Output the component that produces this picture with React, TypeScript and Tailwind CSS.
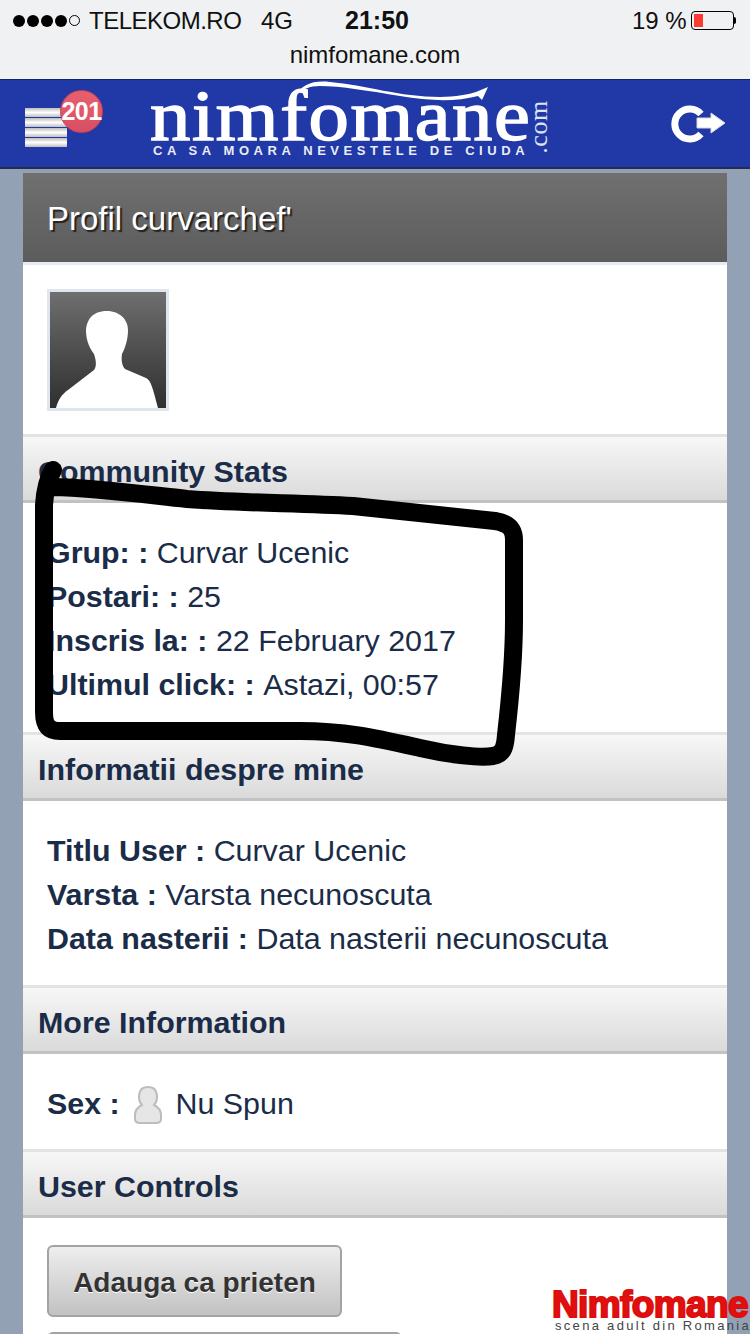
import React from 'react';

const SectionHead = ({ title }: { title: string }) => (
  <div className="h-[69px] border-t-[3px] border-b-[3px] border-t-[#e3e3e3] border-b-[#c2c2c2] bg-gradient-to-b from-[#f7f7f7] to-[#dadada] pl-[15px] pt-[5px] flex items-center">
    <h2 className="text-[30.4px] font-bold text-[#1a2c47] leading-none">{title}</h2>
  </div>
);

const Row = ({ label, value }: { label: string; value: string }) => (
  <div className="h-[44px] flex items-center text-[30.4px] text-[#1a2c47] whitespace-pre">
    <b>{label} </b>
    <span>{value}</span>
  </div>
);

const MenuIcon = () => (
  <div className="flex flex-col w-[42px] gap-[1px]">
    <div className="h-[9px] bg-gradient-to-b from-[#bdbdbd] via-white to-[#bdbdbd]" />
    <div className="h-[9px] bg-gradient-to-b from-[#bdbdbd] via-white to-[#bdbdbd]" />
    <div className="h-[9px] bg-gradient-to-b from-[#bdbdbd] via-white to-[#bdbdbd]" />
    <div className="h-[9px] bg-gradient-to-b from-[#bdbdbd] via-white to-[#bdbdbd]" />
  </div>
);

export default function App() {
  return (
    <div className="relative w-[750px] h-[1334px] overflow-hidden bg-[#92a1b4] font-['Liberation_Sans',Arial,sans-serif]">
      {/* browser chrome */}
      <div className="h-[79px] bg-[#f0f1f3] text-[#111]">
        <div className="h-[41px] flex items-center relative">
          <div className="ml-[13px] flex items-center gap-[2px] w-[68px]">
            <span className="w-[12px] h-[12px] rounded-full bg-black" />
            <span className="w-[12px] h-[12px] rounded-full bg-black" />
            <span className="w-[12px] h-[12px] rounded-full bg-black" />
            <span className="w-[12px] h-[12px] rounded-full bg-black" />
            <span className="w-[11px] h-[11px] rounded-full border border-black" />
          </div>
          <span className="ml-[8px] text-[24px] tracking-[-0.5px] w-[172px]">TELEKOM.RO</span>
          <span className="text-[24px] w-[84px]">4G</span>
          <span className="text-[25px] font-bold w-[287px]">21:50</span>
          <span className="text-[24px] w-[59px]">19 %</span>
          <div className="w-[43px] h-[19px] border border-black rounded-[4px] p-[2px] flex">
            <div className="w-[9px] bg-[#fb3b30]" />
          </div>
          <div className="w-[2px] h-[7px] bg-black rounded-r-sm" />
        </div>
        <div className="text-center text-[24px] leading-[28px]">nimfomane.com</div>
      </div>

      {/* site header */}
      <div className="relative h-[90px] bg-[#2139a6] border-t border-[#13235f] border-b-[2px] border-b-[#232c52]">
        <div className="absolute left-[25px] top-[28px]"><MenuIcon /></div>
        <div className="absolute left-[60px] top-[10px] w-[43px] h-[43px] rounded-full bg-gradient-to-b from-[#e8606f] to-[#d94f62] border border-[#c93f52] flex items-center justify-center text-white font-bold text-[25px] tracking-[-0.5px]">201</div>
        <div className="absolute left-[150px] top-[1px] origin-left scale-x-[1.12] font-['Liberation_Serif',serif] text-white text-[72px] leading-[70px] tracking-[1.4px] [-webkit-text-stroke:1.5px_white]">nimfomane</div>
        <svg className="absolute left-[290px] top-[0px]" width="200" height="24" viewBox="0 0 200 24">
          <path d="M5 16C12 4 24 0 40 2C75 5 110 17 150 17C165 17 180 14 186 12L198 7L192 20L188 16C165 22 140 21 110 16C80 11 50 6 30 6C20 6 12 9 5 16Z" fill="#fff" />
        </svg>
        <div className="absolute left-[153px] top-[63px] text-white font-bold text-[13px] leading-[16px] tracking-[4.57px] whitespace-nowrap opacity-90">CA SA MOARA NEVESTELE DE CIUDA</div>
        <div className="absolute left-[511px] top-[37px] w-[56px] text-center -rotate-90 font-['Liberation_Serif',serif] text-[#dfe3f3] text-[26px] leading-[20px] tracking-[0.5px]">.com</div>
        <svg className="absolute left-[670px] top-[24px]" width="58" height="42" viewBox="0 0 58 42">
          <path d="M31 10A15 15 0 1 0 31 30" fill="none" stroke="#fff" strokeWidth="7" />
          <path d="M27 14H41V9L55 19L41 29V24H27Z" fill="#fff" stroke="#d8d8d8" />
        </svg>
      </div>

      {/* profile panel */}
      <div className="mx-[23px] mt-[4px] bg-white">
        <div className="h-[92px] bg-gradient-to-b from-[#707070] to-[#5c5c5c] pl-[24px] pt-[2px] flex items-center border-b-[3px] border-[#e6ebf1]">
          <h1 className="text-[33px] text-white [text-shadow:2px_2px_1px_#222]">Profil curvarchef'</h1>
        </div>
        <div className="h-[169px] pl-[24px] pt-[24px]">
          <div className="w-[122px] h-[122px] border-[3px] border-[#dfe6ef] bg-gradient-to-b from-[#6f6f6f] to-[#303030] overflow-hidden">
            <svg width="116" height="116" viewBox="0 0 116 116">
              <path d="M6 116C8 108 12 102 18 98L44 78C47 74 46 68 44 62C38 54 36 46 36 38C37 28 42 19 57 19C70 19 78 28 78 38C78 48 75 56 72 62C71 68 72 74 75 77L96 86C100 88 102 92 108 116Z" fill="#fff" />
            </svg>
          </div>
        </div>
        <SectionHead title="Community Stats" />
        <div className="h-[229px] pl-[24px] pt-[28px]">
          <Row label="Grup: :" value="Curvar Ucenic" />
          <Row label="Postari: :" value="25" />
          <Row label="Inscris la: :" value="22 February 2017" />
          <Row label="Ultimul click: :" value="Astazi, 00:57" />
        </div>
        <SectionHead title="Informatii despre mine" />
        <div className="h-[184px] pl-[24px] pt-[28px]">
          <Row label="Titlu User :" value="Curvar Ucenic" />
          <Row label="Varsta :" value="Varsta necunoscuta" />
          <Row label="Data nasterii :" value="Data nasterii necunoscuta" />
        </div>
        <SectionHead title="More Information" />
        <div className="h-[95px] pl-[24px] pt-[28px] flex items-start text-[30.4px] text-[#1a2c47]">
          <div className="h-[44px] flex items-center whitespace-pre">
            <b>Sex : </b>
            <svg className="ml-[5px] mr-[4px] mt-[2px]" width="30" height="40" viewBox="0 0 30 40">
              <path d="M15 2C21 2 24 6 24 12C24 16 23 18 21 20C25 22 28 25 28 30V34C28 37 26 38 23 38H7C4 38 2 37 2 34V30C2 25 5 22 9 20C7 18 6 16 6 12C6 6 9 2 15 2Z" fill="#e6e6e6" stroke="#bdbdbd" strokeWidth="2" />
            </svg>
            <span> Nu Spun</span>
          </div>
        </div>
        <SectionHead title="User Controls" />
        <div className="pl-[24px] pt-[27px] flex flex-col items-start gap-[15px]">
          <button className="w-[295px] h-[72px] pt-[3px] rounded-[6px] border-[2px] border-[#a3a3a3] bg-gradient-to-b from-[#eeeeee] to-[#c2c2c2] text-[#333] font-bold text-[28px] [text-shadow:0_1px_0_#fff]">Adauga ca prieten</button>
          <button className="w-[355px] h-[72px] rounded-[6px] border-[2px] border-[#a3a3a3] bg-gradient-to-b from-[#eeeeee] to-[#c2c2c2]" />
        </div>
      </div>

      {/* marker scribble on the screenshot */}
      <svg className="absolute left-0 top-0 pointer-events-none" width="750" height="1334" viewBox="0 0 750 1334">
        <path d="M53 470C47 480 45 490 44 505V712C44 725 48 731 60 731H300C345 731 375 738 420 748C450 755 480 758 493 756C503 754 505 748 506 735C510 700 514 660 514 620V540C514 528 508 523 495 521L353 506C300 503 240 503 187 499C140 494 95 488 53 487" fill="none" stroke="#000" strokeWidth="18" strokeLinecap="round" strokeLinejoin="round" />
      </svg>

      {/* watermark */}
      <div className="absolute left-[552px] top-[1290px] w-[198px]">
        <div className="text-[37px] leading-[30px] font-bold text-[#e2100f] tracking-[-0.6px] whitespace-nowrap [-webkit-text-stroke:2px_#dc0f0e]">Nimfomane</div>
        <div className="text-[13px] leading-[12px] text-[#444] tracking-[2.3px] whitespace-nowrap pl-[3px]">scena adult din Romania</div>
      </div>
    </div>
  );
}
